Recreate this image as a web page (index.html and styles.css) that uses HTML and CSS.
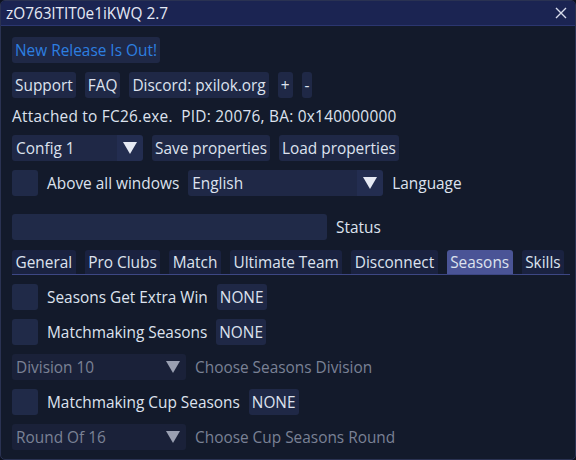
FILE: index.html
```html
<!DOCTYPE html>
<html lang="en">
<head>
  <meta charset="UTF-8" />
  <title>zO763lTIT0e1iKWQ 2.7</title>
  <link rel="stylesheet" href="styles.css">
</head>
<body>
  <div class="window">
    <div class="titlebar">
      <span class="title">zO763lTIT0e1iKWQ 2.7</span>
      <svg class="close" width="12" height="12" viewBox="0 0 12 12">
        <path d="M1 1 L11 11 M11 1 L1 11" stroke="#d8dcec" stroke-width="1.4" fill="none" />
      </svg>
    </div>

    <div class="content">
      <div class="row">
        <button class="btn link">New Release Is Out!</button>
      </div>

      <div class="row">
        <button class="btn">Support</button>
        <button class="btn">FAQ</button>
        <button class="btn">Discord: pxilok.org</button>
        <button class="btn">+</button>
        <button class="btn">-</button>
      </div>

      <div class="row text-row">
        <span class="label attached">Attached to FC26.exe.  PID: 20076, BA: 0x140000000</span>
      </div>

      <div class="row">
        <div class="combo config">
          <span class="combo-value">Config 1</span>
          <span class="combo-arrow"><i class="tri"></i></span>
        </div>
        <button class="btn">Save properties</button>
        <button class="btn">Load properties</button>
      </div>

      <div class="row">
        <span class="check"></span>
        <span class="label">Above all windows</span>
        <div class="combo lang">
          <span class="combo-value">English</span>
          <span class="combo-arrow"><i class="tri"></i></span>
        </div>
        <span class="label">Language</span>
      </div>

      <div class="row spaced">
        <span class="input"></span>
        <span class="label">Status</span>
      </div>

      <div class="tabbar">
        <span class="tab">General</span>
        <span class="tab">Pro Clubs</span>
        <span class="tab">Match</span>
        <span class="tab">Ultimate Team</span>
        <span class="tab">Disconnect</span>
        <span class="tab active">Seasons</span>
        <span class="tab">Skills</span>
      </div>

      <div class="row">
        <span class="check"></span>
        <span class="label">Seasons Get Extra Win</span>
        <button class="btn">NONE</button>
      </div>

      <div class="row">
        <span class="check"></span>
        <span class="label">Matchmaking Seasons</span>
        <button class="btn">NONE</button>
      </div>

      <div class="row">
        <div class="combo disabled">
          <span class="combo-value">Division 10</span>
          <span class="combo-arrow"><i class="tri"></i></span>
        </div>
        <span class="label muted">Choose Seasons Division</span>
      </div>

      <div class="row">
        <span class="check"></span>
        <span class="label">Matchmaking Cup Seasons</span>
        <button class="btn">NONE</button>
      </div>

      <div class="row">
        <div class="combo disabled">
          <span class="combo-value">Round Of 16</span>
          <span class="combo-arrow"><i class="tri"></i></span>
        </div>
        <span class="label muted">Choose Cup Seasons Round</span>
      </div>
    </div>
  </div>
</body>
</html>
```

FILE: styles.css
```css
* {
  box-sizing: border-box;
  margin: 0;
  padding: 0;
}

body {
  width: 576px;
  height: 460px;
  background: #0d1220;
  font-family: 'Open Sans', 'Noto Sans', sans-serif;
  font-size: 15.4px;
  color: #dde2ee;
  overflow: hidden;
}

.window {
  width: 576px;
  height: 460px;
  background: #131a2b;
  border: 1px solid #2a3252;
  border-radius: 5px;
  overflow: hidden;
}

.titlebar {
  height: 25px;
  background: #1b2452;
  border-bottom: 1px solid #2b3670;
  display: flex;
  align-items: center;
  justify-content: space-between;
  padding: 0 8px 0 5px;
}

.title {
  color: #e4e8f4;
}

.close {
  display: block;
}

.content {
  display: flex;
  flex-direction: column;
  gap: 9px;
  padding: 11px 11px 0;
}

.row {
  display: flex;
  align-items: center;
  gap: 9px;
  height: 26px;
}

.text-row {
  height: 19px;
}

.spaced {
  margin-top: 9px;
}

.label {
  white-space: pre;
}

.attached {
  letter-spacing: 0.25px;
}

.muted {
  color: #7a8195;
}

.btn {
  height: 26px;
  padding: 0 3px;
  background: #1f2846;
  border: none;
  border-radius: 3px;
  color: #dde2ee;
  font: inherit;
  white-space: pre;
}

.btn.link {
  color: #2d7fe0;
}

.check {
  width: 26px;
  height: 26px;
  background: #202a48;
  border-radius: 3px;
}

.input {
  width: 315px;
  height: 26px;
  background: #202a48;
  border-radius: 3px;
}

.combo {
  display: flex;
  height: 26px;
  border-radius: 3px;
  overflow: hidden;
}

.combo-value {
  flex: 1;
  display: flex;
  align-items: center;
  padding: 0 4px;
  background: #1f2846;
}

.combo-arrow {
  width: 26px;
  display: flex;
  align-items: center;
  justify-content: center;
  background: #232d50;
}

.tri {
  width: 0;
  height: 0;
  border-left: 7px solid transparent;
  border-right: 7px solid transparent;
  border-top: 12px solid #e6eaf4;
}

.config {
  width: 131px;
}

.lang {
  width: 195px;
}

.combo.disabled {
  width: 174px;
}

.combo.disabled .combo-value {
  background: #1a2139;
  color: #7a8195;
}

.combo.disabled .combo-arrow {
  background: #1a2139;
}

.combo.disabled .tri {
  border-top-color: #9aa0b2;
}

.tabbar {
  display: flex;
  gap: 9px;
  height: 25px;
  margin-top: 1px;
  border-bottom: 1px solid #3d4784;
  width: 558px;
}

.tab {
  height: 24px;
  display: flex;
  align-items: center;
  padding: 0 3.5px;
  background: #1a2240;
  border-radius: 3px 3px 0 0;
  white-space: pre;
}

.tab.active {
  background: #4a5496;
}
```
